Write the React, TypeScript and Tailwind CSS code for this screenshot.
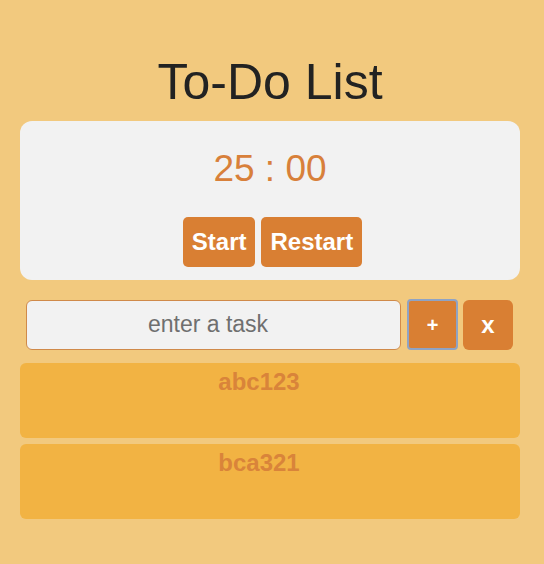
export default function App() {
  const tasks = ["abc123", "bca321"];

  return (
    <div className="min-h-[564px] w-full bg-[#f2c97e] pt-[54px] pl-[20px] pr-[24px] font-['Liberation_Sans',Arial,sans-serif]">
      <h1 className="text-center text-[50px] leading-[56px] text-[#222222] mb-[11px]">To-Do List</h1>

      <div className="bg-[#f2f2f2] rounded-[12px] pt-[28px] pb-[13px] flex flex-col items-center">
        <div className="text-[37px] leading-[40px] text-[#d8803a]">25 : 00</div>
        <div className="mt-[28px] pl-[5px] flex gap-[6px]">
          <button className="h-[50px] px-[9px] rounded-[5px] bg-[#d97f33] text-white font-bold text-[24px]">
            Start
          </button>
          <button className="h-[50px] px-[9px] rounded-[5px] bg-[#d97f33] text-white font-bold text-[24px]">
            Restart
          </button>
        </div>
      </div>

      <div className="mt-[19px] flex items-center justify-center gap-[5px] pl-[6px] pr-[7px]">
        <input
          className="flex-1 h-[50px] rounded-[6px] border border-[#d08a4a] bg-[#f2f2f2] pr-[11px] text-center text-[23px] placeholder:text-[#6f6f6f] outline-none"
          placeholder="enter a task"
        />
        <button className="ml-[1px] w-[51px] h-[51px] rounded-[4px] border-2 border-[#8fa3c4] bg-[#d97f33] text-white font-bold text-[20px] leading-none">
          +
        </button>
        <button className="w-[50px] h-[50px] rounded-[6px] bg-[#d97f33] text-white font-bold text-[24px] leading-none">
          x
        </button>
      </div>

      <div className="mt-[13px] flex flex-col gap-[6px]">
        {tasks.map((t) => (
          <div key={t} className="h-[75px] rounded-[6px] bg-[#f2b343] pt-[5px] pr-[22px] text-center leading-[28px]">
            <span className="text-[24px] font-bold text-[#d9843a]">{t}</span>
          </div>
        ))}
      </div>
    </div>
  );
}
